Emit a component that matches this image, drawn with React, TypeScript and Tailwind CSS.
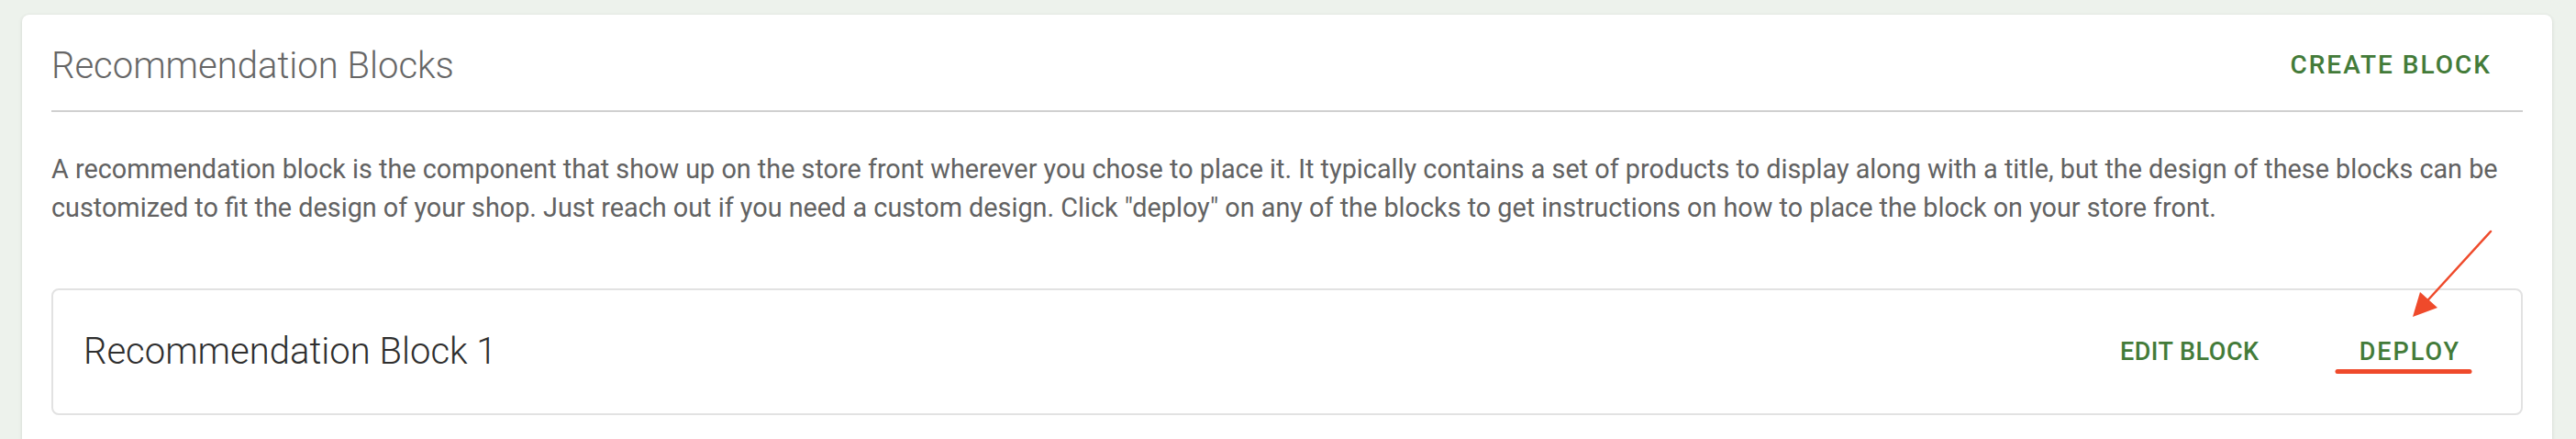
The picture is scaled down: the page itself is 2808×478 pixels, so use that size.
import React from "react";

export default function App() {
  return (
    <div
      className="relative min-h-[478px] overflow-hidden bg-[#edf2ec] pl-6 pr-[26px] pt-4"
      style={{ fontFamily: "Roboto, 'Noto Sans', sans-serif" }}
    >
      <div className="h-[600px] rounded-lg bg-white px-8 pt-8 shadow-[0_1px_4px_rgba(0,0,0,0.12)]">
        <div className="flex items-center justify-between pb-6">
          <h1 className="text-[40px] font-light leading-[48px] text-[#666666]">
            Recommendation Blocks
          </h1>
          <button className="mr-[34px] -mt-[3px] text-[28px] font-medium leading-[32px] tracking-[2px] text-[#437b39]">
            CREATE BLOCK
          </button>
        </div>
        <div className="h-[2px] bg-[#d0d0d0]" />
        <p className="mt-[41px] text-[28.8px] leading-[42px] text-[#626262]">
          A recommendation block is the component that show up on the store front wherever you chose to place it. It
          typically contains a set of products to display along with a title, but the design of these blocks can be
          customized to fit the design of your shop. Just reach out if you need a custom design. Click "deploy" on any
          of the blocks to get instructions on how to place the block on your store front.
        </p>
        <div className="mt-[67px] flex h-[138px] items-center justify-between rounded-lg border-2 border-[#e2e2e2] pl-[33px] pr-[66px]">
          <h2 className="text-[40px] font-light leading-[48px] text-[#2e2e2e]">Recommendation Block 1</h2>
          <div className="flex items-center">
            <button className="text-[27px] font-medium leading-[32px] tracking-[0.5px] text-[#437b39]">
              EDIT BLOCK
            </button>
            <button className="ml-[109px] text-[27px] font-medium leading-[32px] tracking-[2px] text-[#437b39]">
              DEPLOY
            </button>
          </div>
        </div>
      </div>
      <svg
        className="pointer-events-none absolute left-0 top-0"
        width="2808"
        height="478"
        viewBox="0 0 2808 478"
      >
        <line x1="2715" y1="252" x2="2640" y2="334" stroke="#ef4a2b" strokeWidth="2.5" strokeLinecap="round" />
        <polygon points="2630,345 2638,318 2657,335" fill="#ef4a2b" />
        <line x1="2548" y1="404.5" x2="2692" y2="404.5" stroke="#ef4a2b" strokeWidth="5" strokeLinecap="round" />
      </svg>
    </div>
  );
}
